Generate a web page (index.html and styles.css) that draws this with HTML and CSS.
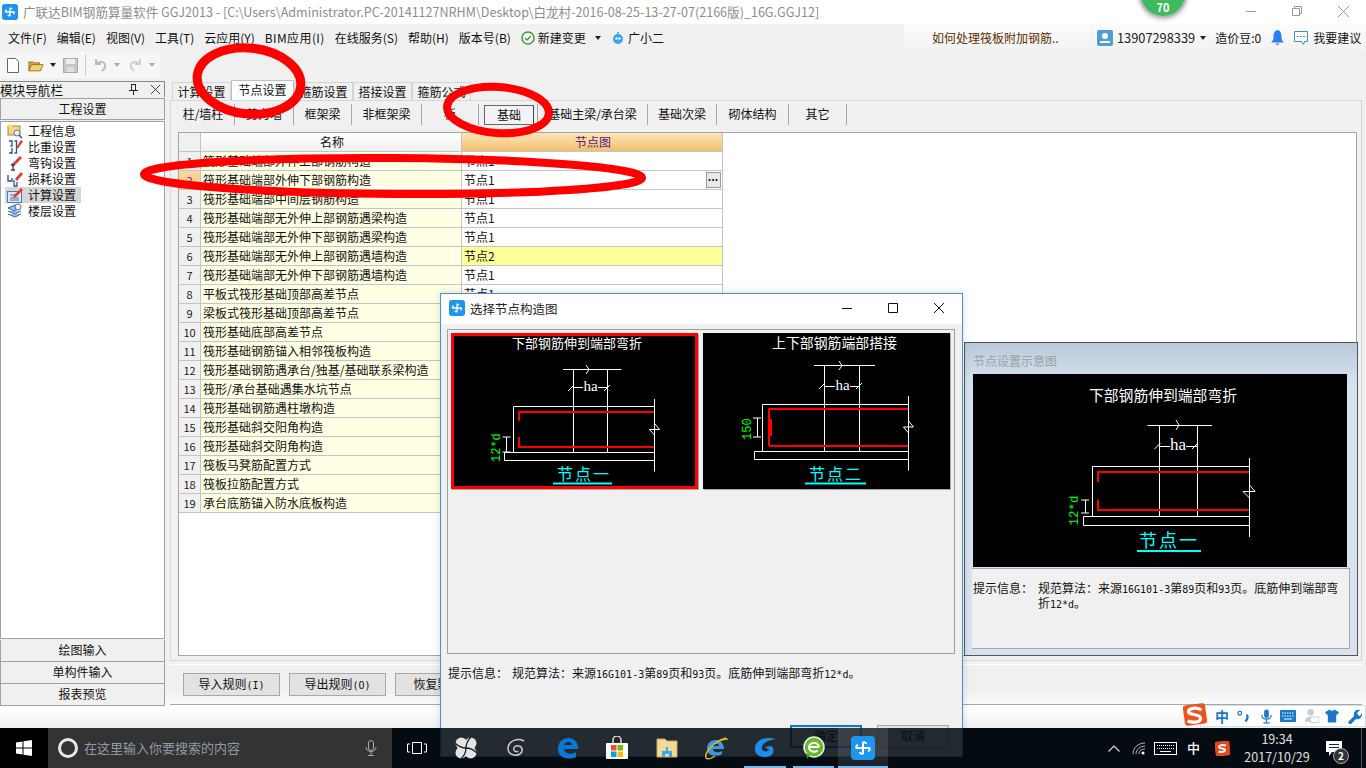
FILE: index.html
```html
<!DOCTYPE html>
<html lang="zh-CN">
<head>
<meta charset="utf-8">
<title>广联达BIM钢筋算量软件</title>
<link rel="stylesheet" href="styles.css">
</head>
<body>
<div class="screen">
  <div class="app">
    <header class="titlebar">
      <svg class="appicon" viewBox="0 0 24 24"><rect width="24" height="24" rx="4" fill="#1e96f0"/><path d="M12 14V6.500a2 2 0 0 1 3 1.500M10 12h8.500a2 2 0 0 1-1.500 3M12 10v7.500a2 2 0 0 1-3-1.500M14 12H5.500a2 2 0 0 1 1.500-3" stroke="#fff" stroke-width="2" fill="none"/></svg>
      <span class="wintitle">广联达BIM钢筋算量软件 GGJ2013 - [C:\Users\Administrator.PC-20141127NRHM\Desktop\白龙村-2016-08-25-13-27-07(2166版)_16G.GGJ12]</span>
      <div class="winbtns">
        <svg viewBox="0 0 46 23"><path d="M18 10.500h10" stroke="#999"/></svg>
        <svg viewBox="0 0 46 23"><path d="M18.500 7.500h7v7h-7zM20.500 7.500v-2h7v7h-2" stroke="#999" fill="none"/></svg>
        <svg viewBox="0 0 46 23"><path d="M18 5l11 11M29 5L18 16" stroke="#999" fill="none"/></svg>
      </div>
    </header>
    <nav class="menubar">
      <span>文件(F)</span><span>编辑(E)</span><span>视图(V)</span><span>工具(T)</span><span>云应用(Y)</span><span class="menu-wide">BIM应用(I)</span><span>在线服务(S)</span><span>帮助(H)</span><span>版本号(B)</span>
      <span class="menuicon"><svg width="14" height="14" viewBox="0 0 14 14"><circle cx="7" cy="7" r="6" fill="#fff" stroke="#3a9a3a" stroke-width="1.500"/><path d="M4 7l2 2 4-4" stroke="#3a9a3a" stroke-width="1.500" fill="none"/></svg>新建变更<i class="caret caret-gap"></i></span>
      <span class="menuicon"><svg width="14" height="14" viewBox="0 0 14 14"><circle cx="7" cy="8" r="5" fill="#35a4e8"/><circle cx="5.500" cy="7.500" r="1.200" fill="#fff"/><circle cx="8.500" cy="7.500" r="1.200" fill="#fff"/><path d="M7 3V1" stroke="#35a4e8" stroke-width="1.500"/></svg>广小二</span>
      <div class="ribbon-right">
        <div class="band band-tip">如何处理筏板附加钢筋..</div>
        <div class="band band-user">
          <svg width="16" height="16" viewBox="0 0 16 16"><rect width="16" height="16" rx="2" fill="#4f9fd6"/><circle cx="8" cy="6" r="3" fill="#fff"/><path d="M3 13h10v-2H3z" fill="#fff"/></svg>
          <span class="phone">13907298339</span><i class="caret"></i>
          <span class="beans">造价豆:0</span>
          <svg class="bell" width="13" height="16" viewBox="0 0 13 16"><path d="M6.500 0C3 1 2.500 4 2.500 7S1.500 11 0 12.500h13C11.500 11 10.500 10 10.500 7S10 1 6.500 0zM4.500 13.500h4l-2 2z" fill="#2a80f0"/></svg>
          <svg class="chat" width="16" height="16" viewBox="0 0 16 16"><path d="M1.500 1.500h13v10h-3l-1 3-2-3h-7z" fill="#fff" stroke="#3a8ae0"/><path d="M4 6.500h8" stroke="#3a8ae0" stroke-dasharray="2 1"/></svg>
          <span>我要建议</span>
        </div>
      </div>
    </nav>
    <div class="toolbar">
      <div class="toolgroup">
        <svg width="12" height="15" viewBox="0 0 12 15"><path d="M.5.5h8l3 3v11H.5z" fill="#fdfdfd" stroke="#666"/></svg>
        <svg class="tm9" width="16" height="15" viewBox="0 0 18 16"><path d="M1 4h5l1 1h6v2H4L1 14z" fill="#d8a848" stroke="#9a7020"/><path d="M1 14l3-7h13l-3 7z" fill="#f4d070" stroke="#9a7020"/></svg>
        <i class="caret tm6"></i>
        <svg class="tm7" width="15" height="15" viewBox="0 0 15 15"><rect x=".5" y=".5" width="14" height="14" fill="#c8c8c8" stroke="#aaa"/><rect x="3" y="1" width="9" height="5" fill="#eee"/><rect x="4" y="9" width="7" height="5" fill="#e0e0e0"/></svg>
        <i class="toolsep tm7"></i>
        <svg class="tm8" width="14" height="14" viewBox="0 0 14 14"><path d="M2 1v5h5M2.500 6C6 2 12 4 11 9c-.4 2-2 3-3 4" stroke="#bcbcbc" stroke-width="2" fill="none"/></svg>
        <i class="caret caret-pale tm6"></i>
        <svg class="tm8" width="14" height="14" viewBox="0 0 14 14"><path d="M12 1v5H7M11.500 6C8 2 2 4 3 9c.4 2 2 3 3 4" stroke="#cfcfcf" stroke-width="2" fill="none"/></svg>
        <i class="caret caret-pale tm7"></i>
      </div>
    </div>
    <main class="workspace">
      <aside class="nav">
        <div class="navhead"><span>模块导航栏</span><span class="navctl">
          <svg width="9" height="11" viewBox="0 0 9 11"><path d="M2.500 0v6M6.500 0v6M0 6.500h9M4.500 7v4M2 .5h5" stroke="#222" fill="none"/></svg>
          <svg width="9" height="9" viewBox="0 0 9 9"><path d="M0 0l9 9M9 0L0 9" stroke="#444"/></svg></span></div>
        <div class="navbtn">工程设置</div>
        <ul class="navlist">
          <li><svg width="16" height="16" viewBox="0 0 16 16"><rect x="1" y="3" width="12" height="9" fill="#f2d48a" stroke="#a88638"/><circle cx="10" cy="10" r="3" fill="#e8f0fa" stroke="#5a7aa8"/><path d="M12 12l3 3" stroke="#555" stroke-width="1.500"/><path d="M3 0l1 2 2 1-2 1-1 2-1-2-2-1 2-1z" fill="#ffe860"/></svg>工程信息</li>
          <li><svg width="16" height="16" viewBox="0 0 16 16"><path d="M2 2h3v5H3.500M5 9v5H2M7.500 2H9.500v12H7.500" stroke="#27509a" fill="none" stroke-width="1.300"/><path d="M9.500 8L14 1l2 1.500-5 7z" fill="#e03a3a"/></svg>比重设置</li>
          <li><svg width="16" height="16" viewBox="0 0 16 16"><path d="M6 8v6M4 15h4M4 10h4" stroke="#333" fill="none" stroke-width="1.300"/><path d="M6 8l7-7 2 2-7 7z" fill="#e03a3a"/></svg>弯钩设置</li>
          <li><svg width="16" height="16" viewBox="0 0 16 16"><path d="M1 4v6h4V7M7 9v6h3v-4" stroke="#27509a" fill="none" stroke-width="1.300"/><path d="M8 8l6-7 2 2-6 7z" fill="#e03a3a"/></svg>损耗设置</li>
          <li class="selected"><svg width="16" height="16" viewBox="0 0 16 16"><rect x=".5" y="4.500" width="14" height="11" fill="#dce8f6" stroke="#4a78b0"/><path d="M3 8h6M3 11h9M3 13h9" stroke="#4a78b0"/><path d="M7 8l7-7 2 2-7 7-3 1z" fill="#e03a3a"/></svg>计算设置</li>
          <li><svg width="16" height="16" viewBox="0 0 16 16"><path d="M1 5l7-3 6 3-7 3zM1 8l7 3 6-3M1 11l7 3 6-3" fill="#9cc4ec" stroke="#2f68b0"/><circle cx="11" cy="4" r="3" fill="#eef" stroke="#667"/></svg>楼层设置</li>
        </ul>
        <div class="navbtn navbtn-low">绘图输入</div>
        <div class="navbtn navbtn-low">单构件输入</div>
        <div class="navbtn navbtn-low">报表预览</div>
      </aside>
      <section class="content">
        <div class="tabs">
          <span class="tab">计算设置</span><span class="tab tab-active">节点设置</span><span class="tab">箍筋设置</span><span class="tab">搭接设置</span><span class="tab">箍筋公式</span>
        </div>
        <div class="tabpanel">
          <div class="subtabs">
            <span class="st st1">柱/墙柱</span><span class="st st2">剪力墙</span><span class="st st3">框架梁</span><span class="st st4">非框架梁</span><span class="st st5">板</span><span class="st st6"><b>基础</b></span><span class="st st7">基础主梁/承台梁</span><span class="st st8">基础次梁</span><span class="st st9">砌体结构</span><span class="st st10">其它</span>
          </div>
          <div class="gridframe">
            <div class="grid">
              <div class="row head"><span class="num"></span><span class="name">名称</span><span class="node">节点图</span></div>
              <div class="row"><span class="num">1</span><span class="name">筏形基础端部外伸上部钢筋构造</span><span class="node">节点1</span></div>
              <div class="row"><span class="num num-cur">2</span><span class="name">筏形基础端部外伸下部钢筋构造</span><span class="node node-cur">节点1<em class="more">•••</em></span></div>
              <div class="row"><span class="num">3</span><span class="name">筏形基础端部中间层钢筋构造</span><span class="node">节点1</span></div>
              <div class="row"><span class="num">4</span><span class="name">筏形基础端部无外伸上部钢筋遇梁构造</span><span class="node">节点1</span></div>
              <div class="row"><span class="num">5</span><span class="name">筏形基础端部无外伸下部钢筋遇梁构造</span><span class="node">节点1</span></div>
              <div class="row"><span class="num">6</span><span class="name">筏形基础端部无外伸上部钢筋遇墙构造</span><span class="node node-mod">节点2</span></div>
              <div class="row"><span class="num">7</span><span class="name">筏形基础端部无外伸下部钢筋遇墙构造</span><span class="node">节点1</span></div>
              <div class="row"><span class="num">8</span><span class="name">平板式筏形基础顶部高差节点</span><span class="node">节点1</span></div>
              <div class="row"><span class="num">9</span><span class="name">梁板式筏形基础顶部高差节点</span><span class="node">节点1</span></div>
              <div class="row"><span class="num">10</span><span class="name">筏形基础底部高差节点</span><span class="node">节点1</span></div>
              <div class="row"><span class="num">11</span><span class="name">筏形基础钢筋锚入相邻筏板构造</span><span class="node">节点1</span></div>
              <div class="row"><span class="num">12</span><span class="name">筏形基础钢筋遇承台/独基/基础联系梁构造</span><span class="node">节点1</span></div>
              <div class="row"><span class="num">13</span><span class="name">筏形/承台基础遇集水坑节点</span><span class="node">节点1</span></div>
              <div class="row"><span class="num">14</span><span class="name">筏形基础钢筋遇柱墩构造</span><span class="node">节点1</span></div>
              <div class="row"><span class="num">15</span><span class="name">筏形基础斜交阳角构造</span><span class="node">节点1</span></div>
              <div class="row"><span class="num">16</span><span class="name">筏形基础斜交阴角构造</span><span class="node">节点1</span></div>
              <div class="row"><span class="num">17</span><span class="name">筏板马凳筋配置方式</span><span class="node">节点1</span></div>
              <div class="row"><span class="num">18</span><span class="name">筏板拉筋配置方式</span><span class="node">节点1</span></div>
              <div class="row"><span class="num">19</span><span class="name">承台底筋锚入防水底板构造</span><span class="node">节点1</span></div>
            </div>
            <div class="sidepanel">
              <div class="sidetitle">节点设置示意图</div>
              <svg class="sideimg" width="374" height="193" viewBox="0 0 374 193">
                <rect width="374" height="193" fill="#000"/>
                <text class="t-w" x="190" y="27" font-size="14.800">下部钢筋伸到端部弯折</text>
                <path class="l-w" d="M174.500 51.500H239M186.500 51.500V142.500M224.500 51.500V142.500M119.500 142.500V92.500H276.500M110.500 142.500H276.500V151.500H110.500ZM276.500 84V163M203 46l3 5-3 5M181.500 75l6-6M219 75l6-6M186.500 72.500H197M213 72.500h11M276.500 111L282 117.500H270L276.500 124M112.500 126V139M108 126h8M108 139h8"/>
                <path class="l-r l-r3" d="M125 108V98H276M125 125.500V136H276"/>
                <text class="t-w t-s" x="205" y="76" font-size="17">ha</text>
                <text class="t-g" font-size="12.500" transform="translate(105,151.500) rotate(-90)">12*d</text>
                <text class="t-c" x="196" y="173" font-size="18">节点一</text>
                <path class="l-c" d="M164 177H228"/>
              </svg>
              <div class="sidehint">
                <span class="hintlabel">提示信息：</span>
                <span class="hinttext">规范算法：来源<span class="la">16G101-3</span>第<span class="la">89</span>页和<span class="la">93</span>页。底筋伸到端部弯折<span class="la">12*d</span>。</span>
              </div>
            </div>
          </div>
        </div>
        <div class="actions">
          <span class="btn">导入规则<span class="la">(I)</span></span>
          <span class="btn">导出规则<span class="la">(O)</span></span>
          <span class="btn">恢复默认值</span>
        </div>
      </section>
    </main>
  </div>

  <div class="taskbar">
    <div class="startbtn"><svg width="16" height="16" viewBox="0 0 16 16"><path d="M0 2.500l6.500-1v6H0zM7.500 1.300L16 0v7.500H7.500zM0 8.500h6.500v6l-6.500-1zM7.500 8.500H16V16l-8.500-1.300z" fill="#fff"/></svg></div>
    <div class="search">
      <i class="cortana"></i><span>在这里输入你要搜索的内容</span>
      <svg class="mic" width="12" height="16" viewBox="0 0 12 16"><rect x="3.500" y=".5" width="5" height="10" rx="2.500" fill="none" stroke="#aaa"/><path d="M1 7c0 6 10 6 10 0M6 12v3M3 15.500h6" fill="none" stroke="#aaa"/></svg>
    </div>
    <div class="taskicons">
      <span class="ti"><svg width="20" height="14" viewBox="0 0 20 14"><path d="M5.500 1.500h9v11h-9zM3 3H.5v8H3M17 3h2.500v8H17" fill="none" stroke="#fff"/></svg></span>
      <span class="ti"><svg width="22" height="22" viewBox="0 0 22 22"><circle cx="6.300" cy="6.300" r="5.800" fill="#e4e4e4"/><circle cx="15.700" cy="6.300" r="5.800" fill="#e4e4e4"/><circle cx="6.300" cy="15.700" r="5.800" fill="#e4e4e4"/><circle cx="15.700" cy="15.700" r="5.800" fill="#e4e4e4"/><path d="M11 11C11 6 13 3 16 0M11 11c5 0 8 2 11 5M11 11c0 5-2 8-5 11M11 11c-5 0-8-2-11-5" fill="none" stroke="#222" stroke-width="1.300"/></svg></span>
      <span class="ti"><svg width="20" height="20" viewBox="0 0 20 20"><path d="M18 3C12 0 3 2 2 10c-.5 6 7 9 12 6 3-2 3-7-1-8-3-1-6 1-5 4 1 2 3 2 4 1" fill="none" stroke="#ccc" stroke-width="1.500"/></svg></span>
      <span class="ti ti-e"><svg width="22" height="22" viewBox="0 0 22 22"><path d="M1 12C1 4 7 1 12 1c6 0 9 5 9 11H7c0 5 8 6 12 3v5c-6 3-18 2-18-8zM7 8h8c0-4-7-4-8 0z" fill="#0a78d4"/></svg></span>
      <span class="ti"><svg width="24" height="24" viewBox="0 0 24 24"><rect x="1" y="7" width="22" height="16" rx="1" fill="#fff"/><path d="M8 7V4a4 4 0 0 1 8 0v3" fill="none" stroke="#ddd" stroke-width="1.500"/><rect x="6" y="9" width="5.500" height="5.500" fill="#f25022"/><rect x="12.500" y="9" width="5.500" height="5.500" fill="#7fba00"/><rect x="6" y="15.500" width="5.500" height="5.500" fill="#00a4ef"/><rect x="12.500" y="15.500" width="5.500" height="5.500" fill="#ffb900"/></svg></span>
      <span class="ti"><svg width="22" height="20" viewBox="0 0 22 20"><path d="M1 1h8l2 2h10v16H1z" fill="#f3d999" stroke="#c8a85a"/><path d="M6 19v-6h4v-4h2v4h4v6h-3v-3H9v3z" fill="#3ca8e8"/></svg></span>
      <span class="ti"><svg width="24" height="24" viewBox="0 0 24 24"><path d="M3 13c0-6 4-9 9-9s8 4 8 9H9c0 4 6 4 9 2v3c-5 3-15 2-15-5zM9 10h6c0-3-5-3-6 0z" fill="#3a9ae0"/><path d="M2 22C0 17 10 5 22 2c-3 1-5 2-7 3 5-2 9-3 8-1M2 22c2 2 6 0 9-2" fill="none" stroke="#e8b820" stroke-width="1.500"/></svg></span>
      <span class="ti ti-on ti-g"><svg width="24" height="24" viewBox="0 0 24 24"><path d="M23 3C14 0 3 3 2 12c-1 8 9 11 15 8 4-2 5-8 1-10l-6 1 4 3c-3 3-8 1-7-3 1-5 8-7 14-8z" fill="#1e8fe8"/></svg></span>
      <span class="ti ti-on ti-g"><svg width="22" height="24" viewBox="0 0 22 24"><circle cx="11" cy="11" r="10" fill="#64bc26" stroke="#eee" stroke-width="1.500"/><path d="M6 11h10M16 11a5 4.500 0 1 0-1.500 3.500" stroke="#fff" stroke-width="2" fill="none"/><path d="M3 17l1 6 3-4" fill="#3a9a2a"/></svg></span>
      <span class="ti ti-on ti-active"><svg width="24" height="24" viewBox="0 0 24 24"><rect width="24" height="24" rx="4" fill="#1e96f0"/><path d="M12 14V6.500a2 2 0 0 1 3 1.500M10 12h8.500a2 2 0 0 1-1.500 3M12 10v7.500a2 2 0 0 1-3-1.500M14 12H5.500a2 2 0 0 1 1.500-3" stroke="#fff" stroke-width="2" fill="none"/></svg></span>
    </div>
    <div class="tray">
      <svg width="12" height="7" viewBox="0 0 12 7"><path d="M.5 6.500L6 1l5.500 5.500" fill="none" stroke="#ddd" stroke-width="1.200"/></svg>
      <svg class="trm12" width="14" height="13" viewBox="0 0 14 13"><path d="M1 12C1 6 6 1 13 1M4 12c0-4 4-8 9-8M7 12c0-3 2-5 6-5" fill="none" stroke="#bbb"/><circle cx="11" cy="11" r="1.500" fill="#fff"/></svg>
      <svg class="trm8" width="23" height="13" viewBox="0 0 23 13"><rect x=".5" y=".5" width="22" height="12" fill="none" stroke="#fff"/><path d="M3 3.500h17M3 6.500h17" stroke="#fff" stroke-dasharray="1 1"/><path d="M6 9.500h11" stroke="#fff"/></svg>
      <span class="imezh trm10">中</span>
      <svg class="trm15" width="15" height="15" viewBox="0 0 15 15"><rect width="15" height="15" rx="2" fill="#e8451c" transform="rotate(-8 7.500 7.500)"/><path d="M11 4.500C8 3.500 4 4 4 6s6 1 6 3-4 2.500-6.500 1.500" fill="none" stroke="#fff" stroke-width="2"/></svg>
      <div class="clock trm12"><span>19:34</span><span>2017/10/29</span></div>
      <span class="notif trm13"><svg width="18" height="17" viewBox="0 0 18 17"><path d="M1 1h16v11H7l-3 4v-4H1z" fill="#fff"/><path d="M4 4.500h10M4 7.500h10" stroke="#222"/></svg><b>2</b></span>
    </div>
  </div>

  <section class="dialog">
    <div class="dlgtitle">
      <svg width="16" height="16" viewBox="0 0 24 24"><rect width="24" height="24" rx="4" fill="#1e96f0"/><path d="M12 14V6.500a2 2 0 0 1 3 1.500M10 12h8.500a2 2 0 0 1-1.500 3M12 10v7.500a2 2 0 0 1-3-1.500M14 12H5.500a2 2 0 0 1 1.500-3" stroke="#fff" stroke-width="2" fill="none"/></svg>
      <span>选择节点构造图</span>
      <div class="dlgctl">
        <svg viewBox="0 0 46 30"><path d="M18 15.500h10" stroke="#111"/></svg>
        <svg viewBox="0 0 46 30"><path d="M18.500 10.500h9v9h-9z" stroke="#111" fill="none"/></svg>
        <svg viewBox="0 0 46 30"><path d="M18 10l10 10M28 10L18 20" stroke="#111" fill="none"/></svg>
      </div>
    </div>
    <div class="dlgbody">
      <div class="choices">
        <svg class="choice" width="247" height="156" viewBox="0 0 247 156">
          <rect width="247" height="156" fill="#000"/>
          <rect x="1.500" y="1.500" width="244" height="153" fill="none" stroke="#f00" stroke-width="3"/>
          <text class="t-w" x="126" y="15" font-size="13">下部钢筋伸到端部弯折</text>
          <path class="l-w" d="M112 36.500H170.500M122.500 36.500V119M156.500 36.500V119M62.500 119.500V73.500H203.500M53.500 119.500H203.500V127.500H53.500ZM203.500 66V138.500M135 32l3 4.500-3 4.500M117 58l6-6M153 58l6-6M122.500 54.500H132M147 54.500h9.500M203.500 90.500L208.500 96.500H198.500L203.500 102M55.500 104V119M51.500 104h8M51.500 119h8"/>
          <path class="l-r l-r2" d="M68 88V79H203M68 104V114H203"/>
          <text class="t-w t-s" x="139.500" y="58" font-size="15">ha</text>
          <text class="t-g" font-size="12" transform="translate(49,129) rotate(-90)">12*d</text>
          <text class="t-c" x="133" y="147" font-size="16">节点一</text>
          <path class="l-c" d="M102 150.500H161"/>
        </svg>
        <svg class="choice" width="247" height="156" viewBox="0 0 247 156">
          <rect width="247" height="156" fill="#000"/>
          <text class="t-w" x="131.500" y="15" font-size="13.900">上下部钢筋端部搭接</text>
          <path class="l-w" d="M111 32.500H172M121.500 32.500V118M156.500 32.500V118M59.500 118.500V71.500H205.500M51.500 118.500H205.500V126.500H51.500ZM205.500 63V137.500M136 28l3 4.500-3 4.500M116 56l6-6M153 56l6-6M121.500 53.500H132M147 53.500h9.500M205.500 88L210.500 94H200.500L205.500 100M54.500 85V104M50 85h8M50 104h8"/>
          <path class="l-r l-r2" d="M66 113V76H205M66 113H205M68 86V103"/>
          <text class="t-w t-s" x="139.500" y="57" font-size="15">ha</text>
          <text class="t-g" font-size="12" transform="translate(48,107) rotate(-90)">150</text>
          <text class="t-c" x="133" y="147" font-size="16">节点二</text>
          <path class="l-c" d="M102 150.500H163"/>
        </svg>
      </div>
      <div class="dlghint"><span class="hintlabel2">提示信息：</span><span>规范算法：来源<span class="la">16G101-3</span>第<span class="la">89</span>页和<span class="la">93</span>页。底筋伸到端部弯折<span class="la">12*d</span>。</span></div>
      <div class="dlgbtns"><span class="dbtn dbtn-def">确定</span><span class="dbtn">取消</span></div>
    </div>
  </section>

  <div class="score"><span>70</span></div>

  <div class="imebar">
    <svg class="imelogo" width="26" height="25" viewBox="0 0 28 26"><rect x="2" y="2" width="24" height="22" rx="3" fill="#ed5220" transform="rotate(-8 14 13)"/><path d="M21 8C15 5 7 6 7 10s13 2 13 7-9 5-14 3" fill="none" stroke="#fff" stroke-width="3.500"/></svg>
    <span class="imezh2">中</span>
    <svg width="13" height="14" viewBox="0 0 14 14"><circle cx="3" cy="4" r="2" fill="none" stroke="#1a78c8" stroke-width="1.300"/><path d="M10 6c2 0 2 4-1 7" fill="none" stroke="#1a78c8" stroke-width="2.400"/></svg>
    <svg class="im11" width="11" height="17" viewBox="0 0 14 18"><rect x="4" y="0" width="6" height="11" rx="3" fill="#1a78c8"/><path d="M1 7c0 7 12 7 12 0M7 12v4M3 17h8" fill="none" stroke="#1a78c8" stroke-width="1.500"/></svg>
    <svg width="16" height="12" viewBox="0 0 16 12"><rect width="16" height="12" rx="1" fill="#1a78c8"/><path d="M2 3h12M2 6h12" stroke="#fff" stroke-dasharray="1.500 1"/><path d="M4 9h8" stroke="#fff"/></svg>
    <svg width="15" height="16" viewBox="0 0 16 16"><circle cx="7" cy="4" r="3.500" fill="#c4ced8"/><path d="M1 14c0-7 10-7 10 0z" fill="#c4ced8"/><rect x="7" y="9" width="9" height="6" fill="#fff" stroke="#c4ced8"/></svg>
    <svg class="im6" width="14" height="14" viewBox="0 0 15 14"><path d="M5 0C6 2 9 2 10 0l5 3-2 3-1-1v9H3V5L2 6 0 3z" fill="#1a78c8"/></svg>
    <svg width="15" height="15" viewBox="0 0 15 15"><path d="M1 13l6-6C6 3 9 0 13 1l-3 3 1 2 2 1 2-3c1 4-3 7-6 6l-6 6z" fill="#1a78c8"/></svg>
  </div>

  <svg class="annot" width="1366" height="768" viewBox="0 0 1366 768">
    <ellipse class="e1" cx="249" cy="81" rx="52" ry="33" transform="rotate(6 249 81)"/>
    <ellipse cx="498" cy="110" rx="51" ry="23" transform="rotate(4 498 110)"/>
    <ellipse cx="393" cy="176" rx="249" ry="18" transform="rotate(.4 393 176)"/>
  </svg>
</div>
</body>
</html>
```

FILE: styles.css
```css
* { box-sizing: border-box; }
html, body { margin: 0; padding: 0; height: 100%; }
body { background: #000; font: 12px/1.2 "Noto Sans CJK SC", "Noto Sans", sans-serif; color: #111; overflow: hidden; }
ul { margin: 0; padding: 0; list-style: none; }
svg { display: block; flex: none; }
i, em { font-style: normal; }

.screen { position: relative; width: 1366px; height: 768px; overflow: hidden; display: flex; flex-direction: column; }
.app { height: 728px; flex: none; display: flex; flex-direction: column; background: linear-gradient(#f0f0f0 690px, #fff 710px, #f0f0f0); }

.titlebar { height: 24px; flex: none; background: #fff; display: flex; align-items: center; padding-left: 2px; gap: 5px; }
.appicon { width: 16px; height: 16px; }
.wintitle { font-size: 12.570px; color: #8c8c8c; white-space: nowrap; width: 1000px; flex: none; }
.winbtns { display: flex; flex: none; margin-left: auto; }
.winbtns svg { width: 46px; height: 23px; }

.menubar { height: 28px; flex: none; display: flex; align-items: center; gap: 10px; padding-left: 8px; background: #f0f0f0; position: relative; white-space: nowrap; }
.menu-wide { letter-spacing: .4px; }
.menuicon { display: flex; align-items: center; gap: 3px; }
.caret { display: inline-block; width: 0; height: 0; border: 3px solid transparent; border-top: 4px solid #222; border-bottom: 0; flex: none; }
.caret-gap { margin-left: 6px; }
.caret-pale { border-top-color: #aaa; }
.ribbon-right { position: absolute; left: 904px; top: 0; display: flex; gap: 1px; height: 28px; }
.band { height: 28px; background: linear-gradient(#fcfcfc, #f1f1f1); display: flex; align-items: center; }
.band-tip { width: 188px; padding-left: 28px; color: #5b2f00; }
.band-user { width: 273px; padding-left: 4px; }
.phone { margin-left: 4px; font-size: 12.800px; color: #222; }
.band-user .caret { margin: 0 9px 0 5px; }
.beans { margin-right: 10px; }
.chat { margin: 0 4px 0 9px; }

.toolbar { height: 29px; flex: none; }
.toolgroup { width: 160px; height: 26px; background: #f6f6f6; display: flex; align-items: center; padding-left: 7px; }
.toolsep { width: 1px; height: 22px; background: #ccc; flex: none; }
.tm6 { margin-left: 6px; }
.tm7 { margin-left: 7px; }
.tm8 { margin-left: 8px; }
.tm9 { margin-left: 9px; }

.workspace { display: flex; height: 625px; flex: none; padding-right: 4px; }
.nav { width: 165px; flex: none; display: flex; flex-direction: column; }
.navhead { height: 16px; display: flex; align-items: center; justify-content: space-between; border: 1px solid #888; border-width: 1px 1px 0 0; padding-right: 4px; font-size: 12.600px; flex: none; }
.navctl { display: flex; gap: 13px; align-items: center; }
.navbtn { height: 22px; flex: none; display: flex; align-items: center; justify-content: center; border: 1px solid #a0a0a0; background: #f0f0f0; margin-top: 1px; }
.navbtn-low { margin-top: 0; border-top: 0; }
.navlist { height: 518px; flex: none; margin: 1px 0 1px; border: 1px solid #a0a0a0; background: #fff; padding: 1px 0 0 4px; }
.navlist li { height: 16px; display: flex; align-items: center; gap: 5px; width: 76px; padding-left: 2px; }
.navlist li.selected { background: #d6d6d6; }

.content { flex: 1; margin-left: 5px; display: flex; flex-direction: column; min-width: 0; }
.tabs { height: 19px; flex: none; display: flex; align-items: flex-end; padding-left: 2px; }
.tab { height: 18px; width: 59px; flex: none; border: 1px solid #d4d4d4; border-bottom: 0; background: #f0f0f0; text-align: center; line-height: 18px; }
.tab-active { width: 63px; height: 20px; background: #fff; border-color: #c0c0c0; line-height: 17px; }
.tabpanel { flex: none; height: 561px; border: 1px solid #d8d8d8; border-right-color: #d0d0d0; background: #f0f0f0; padding: 3px 4px 4px 7px; display: flex; flex-direction: column; }
.subtabs { height: 22px; flex: none; display: flex; margin-left: -6px; }
.st { flex: none; height: 21px; border-right: 1px solid #a8a8a8; text-align: center; line-height: 20px; }
.st1 { width: 63px; } .st2 { width: 59px; } .st3 { width: 58px; } .st4 { width: 70px; } .st5 { width: 57px; }
.st6 { width: 59px; padding-top: 1px; }
.st6 b { display: block; width: 50px; height: 20px; margin-left: 5px; font-weight: 400; background: #f3f3f3; border: 1px solid #666; border-right-color: #444; line-height: 18px; }
.st7 { width: 110px; } .st8 { width: 69px; } .st9 { width: 72px; } .st10 { width: 58px; }

.gridframe { position: relative; flex: 1; margin-top: 6px; background: #fff; border: 1px solid #a6a6a6; }
.grid { display: flex; flex-direction: column; width: 544px; }
.row { display: grid; grid-template-columns: 22px 261px 261px; height: 19px; flex: none; }
.row > span { border-right: 1px solid #c4c4c4; border-bottom: 1px solid #c4c4c4; line-height: 18px; white-space: nowrap; overflow: hidden; }
.num { background: #f0f0f0; text-align: center; font-size: 11px; color: #222; }
.num-cur { background: linear-gradient(#fbd9a0, #f4c480); color: #6a1a8a; }
.name { background: #ffffe4; padding-left: 2px; }
.node { background: #fff; padding-left: 2px; position: relative; }
.node-mod { background: #ffff99; }
.more { position: absolute; right: 1px; top: 1px; width: 15px; height: 16px; background: #e8e8e8; border: 1px solid #999; font-family: "Liberation Sans", sans-serif; font-size: 7px; letter-spacing: 1px; line-height: 13px; text-align: center; color: #000; }
.head .num { background: #f0f0f0; }
.head .name { background: linear-gradient(#fff, #efefef); text-align: center; }
.head .node { background: linear-gradient(#fde6b6, #f2c070); text-align: center; color: #5a1a8a; }

.sidepanel { position: absolute; left: 785px; top: 209px; width: 394px; height: 314px; border: 1px solid #555; background: linear-gradient(#b9c9d9, #d6e2ef 40px, #d6e2ef); padding: 9px 8px 0 8px; }
.sidetitle { color: #a0a0a0; height: 22px; line-height: 18px; }
.sidehint { height: 81px; margin: 1px -1px 0; padding-top: 12px; display: flex; background: #f0f0f0; border: 1px solid #a8a8a8; border-width: 1px 1px 1px 0; line-height: 13px; }
.hintlabel { width: 66px; flex: none; padding-left: 1px; }
.hinttext { width: 305px; }
.la { font-family: "DejaVu Sans Mono", monospace; font-size: 10px; }

.actions { height: 41px; flex: none; margin-top: 3px; border-top: 1px solid #fff; border-bottom: 1px solid #a8a8a8; display: flex; align-items: center; gap: 9px; padding-left: 13px; }
.btn { width: 97px; height: 23px; flex: none; border: 1px solid #a8a8a8; background: #e2e2e2; text-align: center; line-height: 20px; }

.taskbar { position: relative; z-index: 5; height: 40px; flex: none; display: flex; align-items: center; background: rgba(6, 14, 20, .87); color: #fff; }
.startbtn { width: 48px; height: 40px; background: #000; display: flex; align-items: center; justify-content: center; }
.search { width: 344px; height: 40px; background: #333; display: flex; align-items: center; padding-left: 10px; color: #8f9aa4; font-size: 13px; }
.cortana { width: 20px; height: 20px; border: 3px solid #e8e8e8; border-radius: 50%; flex: none; margin-right: 6px; }
.mic { margin-left: auto; margin-right: 15px; }
.taskicons { display: flex; height: 40px; }
.ti { position: relative; width: 49.600px; height: 40px; display: flex; align-items: center; justify-content: center; flex: none; }
.ti-e { margin-left: 2px; }
.ti-g { margin-left: -1px; }
.ti-on::after { content: ""; position: absolute; left: 4px; right: 4px; bottom: 0; height: 2px; background: #76b9ed; }
.ti-active { background: rgba(255, 255, 255, .1); }
.ti-active::after { left: 0; right: 0; }
.tray { position: absolute; right: 0; top: 0; height: 40px; display: flex; align-items: center; width: 260px; padding-left: 2px; }
.tray::after { content: ""; position: absolute; left: 255px; top: 0; width: 1px; height: 40px; background: #555; }
.trm8 { margin-left: 8px; }
.trm10 { margin-left: 10px; }
.trm12 { margin-left: 12px; }
.trm13 { margin-left: 13px; }
.trm15 { margin-left: 15px; }
.imezh { font-size: 13px; font-weight: 500; }
.clock { display: flex; flex-direction: column; align-items: center; gap: 3px; width: 70px; font-size: 12.500px; color: #e0e0e0; line-height: 15px; margin-top: -2px; }
.notif { position: relative; }
.notif b { position: absolute; left: 8px; top: 8px; width: 16px; height: 16px; border-radius: 50%; background: #333; border: 1px solid #aaa; font-size: 10px; line-height: 14px; text-align: center; }

.dialog { position: absolute; left: 440px; top: 293px; width: 523px; height: 464px; z-index: 3; border: 1px solid #4a90d9; background: #f0f0f0; box-shadow: 0 0 8px rgba(0, 0, 0, .15); display: flex; flex-direction: column; }
.dlgtitle { height: 30px; flex: none; background: #fff; display: flex; align-items: center; padding: 0 0 2px 8px; gap: 5px; font-size: 12.500px; color: #222; }
.dlgctl { display: flex; margin-left: auto; }
.dlgctl svg { width: 46px; height: 30px; }
.dlgbody { flex: 1; padding: 5px 7px 0 6px; display: flex; flex-direction: column; }
.choices { height: 325px; flex: none; border: 1px solid #a0a0a0; display: flex; gap: 5px; padding: 3px 4px 0 3px; align-items: flex-start; }
.choice { box-shadow: 1px 1px 0 #a8a8a8; }
.dlghint { margin-top: 12px; height: 14px; display: flex; line-height: 14px; padding-left: 1px; }
.hintlabel2 { width: 64px; flex: none; }
.dlgbtns { display: flex; justify-content: flex-end; gap: 15px; margin-top: 45px; padding-right: 6px; }
.dbtn { width: 72px; height: 23px; border: 1px solid #a8a8a8; background: #e2e2e2; text-align: center; line-height: 19px; font-size: 12px; color: #111; }
.dbtn-def { border: 2px solid #0a78d4; line-height: 17px; }

.t-w { fill: #fff; text-anchor: middle; }
.t-s { font-family: "Liberation Serif", serif; }
.t-g { fill: #00ff00; font-family: "Liberation Mono", monospace; }
.t-c { fill: #00ffff; text-anchor: middle; letter-spacing: 2px; }
.l-w { stroke: #fff; fill: none; stroke-width: 1; }
.l-r { stroke: #f00; fill: none; }
.l-r2 { stroke-width: 2; }
.l-r3 { stroke-width: 2; }
.l-c { stroke: #00ffff; stroke-width: 2; fill: none; }

.score { position: absolute; z-index: 6; left: 1139px; top: -30px; width: 48px; height: 48px; border-radius: 50%; background: #3dbb5e; border: 2px solid #b9b9b9; box-shadow: 0 1px 5px rgba(0, 0, 0, .3); color: #fff; font-weight: 700; font-size: 11px; text-align: center; }
.score span { position: absolute; left: 0; right: 0; top: 29px; }

.imebar { position: absolute; z-index: 6; left: 1200px; top: 705px; width: 166px; height: 22px; background: #fff; border: 1px solid #cfe0f0; display: flex; align-items: center; gap: 8px; padding-left: 14px; }
.imelogo { position: absolute; left: -19px; top: -4px; }
.imezh2 { color: #1a78c8; font-size: 14px; font-weight: 700; width: 14px; flex: none; }
.im11 { margin-left: 3px; }
.im6 { margin-left: -2px; }

.annot { position: absolute; left: 0; top: 0; z-index: 7; pointer-events: none; }
.annot ellipse { fill: none; stroke: #f00; stroke-width: 8; }
.annot .e1 { stroke-width: 9; }
```
